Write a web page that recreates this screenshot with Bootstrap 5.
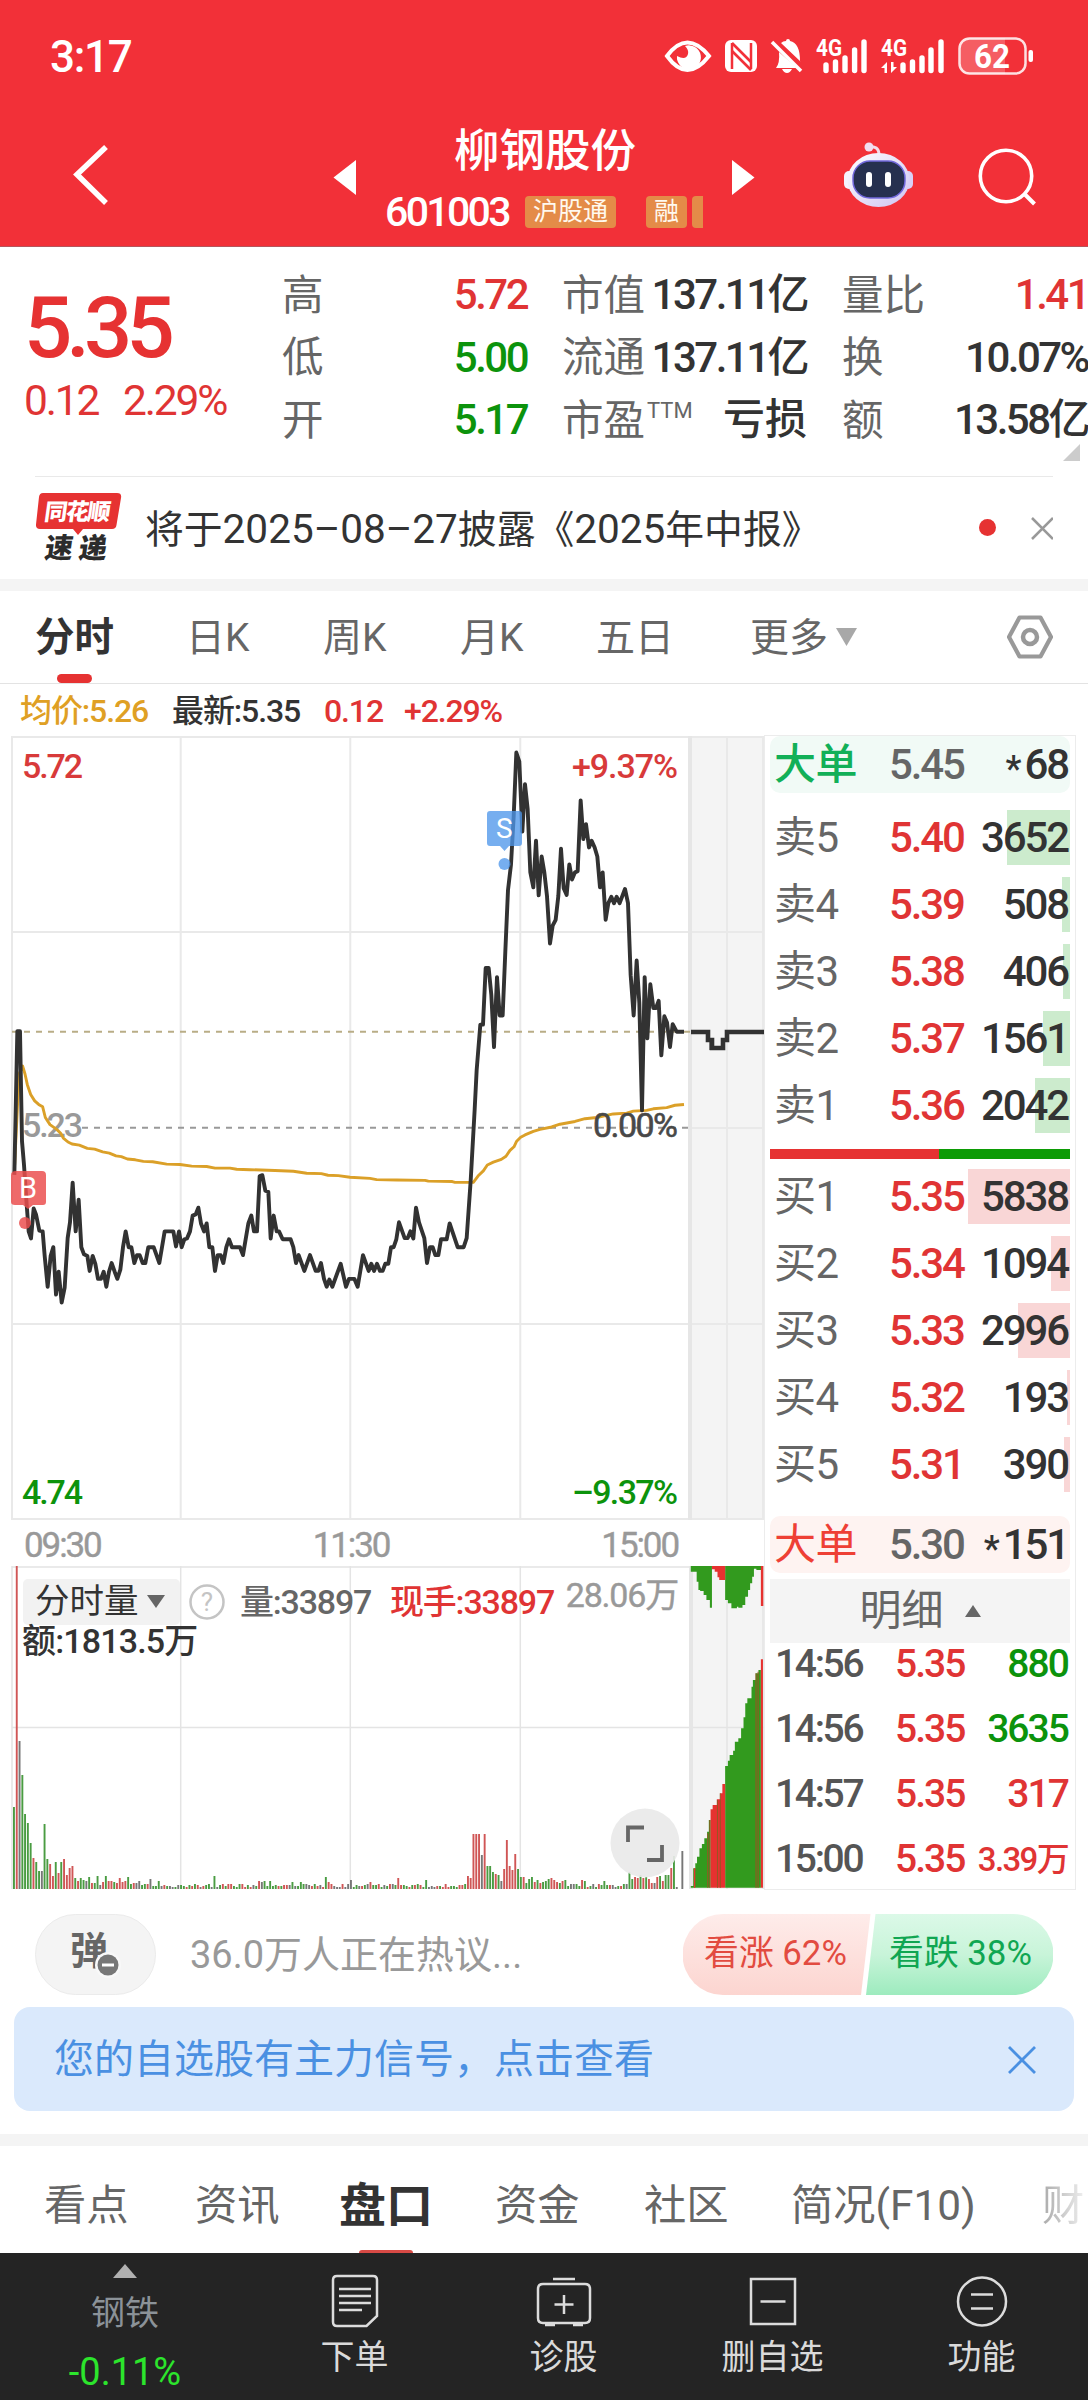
<!DOCTYPE html>
<html lang="zh-CN">
<head>
<meta charset="utf-8">
<meta name="viewport" content="width=device-width, initial-scale=1">
<title>柳钢股份 601003</title>
<link href="https://cdn.jsdelivr.net/npm/bootstrap@5.3.0/dist/css/bootstrap.min.css" rel="stylesheet">
<script src="https://cdn.jsdelivr.net/npm/bootstrap@5.3.0/dist/js/bootstrap.bundle.min.js"></script>
<style>
  body{width:1088px;height:2400px;overflow:hidden;background:#fff;color:#333;font-family:Roboto,"Noto Sans CJK SC",sans-serif;font-size:40px;line-height:1;white-space:nowrap}
  svg{display:block;flex:none}
  .num{font-weight:500;letter-spacing:-.05em}
  .up{color:#e03434}.down{color:#0c930c}.muted{color:#666}.soft{color:#999}
  .top{height:247px;background:#f23038;border-bottom:1px solid #b5555c;color:#fff}
  .statusbar{height:114px;padding:0 54px 0 50px}
  .clock{font-size:44px;font-weight:500;letter-spacing:-.03em}
  .titlebar{height:132px}
  .stock-name{font-size:45.5px;line-height:58px;font-weight:500;margin-top:5px}
  .code{font-size:41px;line-height:34px;letter-spacing:-.065em;width:139px;font-weight:500}
  .tag{background:#e48b48;border-radius:4px;height:32px;font-size:25px;line-height:31px;color:#fff9ef;text-align:center}
  .quote{height:229px;padding-top:17px}
  .price{font-size:85px;line-height:74px;font-weight:500;letter-spacing:-.07em;margin-top:27px;color:#e63232}
  .chg{font-size:42.5px;line-height:42px;margin-top:15px;font-weight:400}
  .qcol{width:245px}
  .qcol>div{height:62.6px;font-size:42px}
  .qcol .num{letter-spacing:-.06em}
  .qcol span:first-child{font-size:41.5px;color:#666}
  .qcol sup{font-size:22px;top:-.75em;letter-spacing:0;margin-left:2px}
  .notice{height:103px;margin:0 35px;border-top:1px solid #e9e9e9}
  .logo{width:86px;height:74px;overflow:visible}
  .band{height:12px;background:#f4f4f4}
  .ktabs{height:93px;border-bottom:1px solid #e3e3e3;color:#666;font-size:39px}
  .ktabs>div{height:92px;line-height:94px}
  .infoline{height:52px;padding-left:20px;font-size:32px;line-height:55px}
  .infoline .num{letter-spacing:-.035em}
  .axis{height:46px;font-size:35px;line-height:51px;color:#999;padding:0 86px 0 24px}
  .axis span{letter-spacing:-.06em;-webkit-text-stroke:.4px}
  .chartbox{width:764px}
  .book{width:312px;height:1155px;border:1px solid #ececec;padding:0 5px;margin-top:-1px}
  .big{height:57px;border-radius:10px;padding:0 2px 0 4px}
  .lv{height:55px;padding:0 2px 0 4px;margin-bottom:12px;position:relative}
  .lv i{position:absolute;right:0;top:0;height:55px}
  .lv span,.big span{position:relative}
  .c1{width:115px;font-size:42px;letter-spacing:-.01em}.c2{width:80px;font-size:42px}.c3{flex:1;text-align:right;font-size:42px}
  .big .star{font-size:36px;top:2px;margin-right:5px}
  .ask i{background:#ccebcd}.bid i{background:#f9d6d6}
  .lv .c1{color:#666}
  .detail{height:64px;background:#f4f4f4;font-size:42px;color:#666}
  .tk{height:42px;margin-bottom:23px;padding:0 2px 0 5px;font-size:39px}
  .tk>.num:nth-child(1){width:120px;color:#555;letter-spacing:-.06em}.tk>:nth-child(2){width:80px}.tk>:nth-child(3){flex:1;text-align:right}
  .vol{position:relative;height:323px}
  .volhead{position:absolute;left:23px;top:12px;width:655px;height:47px}
  .volhead .num{font-size:34px;letter-spacing:-.035em}
  .volsel{width:157px;height:46px;background:#f2f2f2;border-radius:5px;padding-left:12px;font-size:34.500px}
  .maxvol{font-size:34px;letter-spacing:-.035em;-webkit-text-stroke:.4px}
  .expand{position:absolute;left:610px;top:242px}
  .talk{height:117px;padding:12px 35px 0}
  .dm{width:121px;height:81px;border-radius:41px;background:#f4f4f4;border:1px solid #ebebeb;position:relative;font-size:38px;font-weight:700;color:#666;padding-left:34px}
  .dm svg{position:absolute;left:58px;top:36px}
  .poll{width:370px;height:81px;position:relative}
  .poll svg{position:absolute;left:0;top:0}
  .poll span{position:relative;width:185px;text-align:center;font-size:34.800px;line-height:79px}
  .tipbar{height:104px;margin:0 14px;border-radius:16px;background:#dae9fc;color:#4a90e2;padding:2px 38px 0 40px;font-size:40px}
  .ptabs{height:107px;font-size:42.300px;color:#666}
  .ptabs>div{height:107px;line-height:119px}
  .ptabs .on{font-size:47px;font-weight:700;color:#333;position:relative}
  .ptabs .on:after{content:"";position:absolute;left:20px;bottom:0;width:54px;height:3px;background:#d84a45;border-radius:3px 3px 0 0}
  .fade-tab{background:linear-gradient(90deg,#aaa,#eee);-webkit-background-clip:text;color:transparent}
  .dock{height:147px;background:#242424;color:#dadada;font-size:34px}
  .dock>div{width:209px}
  .dock>.dock-first{width:250px}
  .dock .cap{margin-top:12px}
</style>
</head>
<body>
<header class="top">
  <div class="statusbar d-flex align-items-center justify-content-between">
    <span class="clock">3:17</span>
    <svg width="370" height="60" viewBox="665 27 370 60" fill="#fff">
      <path d="M668 56Q688 29 710 56Q688 84 668 56Z" fill="none" stroke="#fff" stroke-width="4"/><path d="M686 46a12 12 0 1 1-8 10q9 5 11-2 1-4-3-8z"/>
      <rect x="726" y="40" width="32" height="32" rx="6"/><path d="M733 43V69M752 69V43" stroke="#f23038" stroke-width="2.5"/><path d="M733 43L752 62M733 51L752 70" stroke="#f23038" stroke-width="2.6"/>
      <path d="M777 68q4-5 3-16l18 16zM782 43q2-2 5-2 0-2 2-2t2 2q10 2 10 20l1 1z"/><path d="M773 42L802 71" stroke="#fff" stroke-width="3.6"/><path d="M783 69h10q-2 4-5 4t-5-4z"/>
      <g font-family="Roboto" font-weight="700" font-size="23"><text x="817" y="56" textLength="26" lengthAdjust="spacingAndGlyphs">4G</text><text x="882" y="56" textLength="26" lengthAdjust="spacingAndGlyphs">4G</text></g>
      <path d="M827 65V70.5M836.5 62V70.5M846 58V70.5M855.6 50V70.5M865 42V70.5M904 65V70.5M913.5 62V70.5M923 58V70.5M932 50V70.5M942 42V70.5" stroke="#fff" stroke-width="5.4" stroke-linecap="round"/>
      <path d="M882 68l6-6v11h-2.500v-5zM898 67l-6 6V62h2.500v5z"/>
      <path d="M971 38h35v36h-35q-10 0-10-10V48q0-10 10-10z" opacity=".22"/><rect x="960.500" y="38.500" width="66" height="35" rx="10" fill="none" stroke="#fff" stroke-width="2.500" opacity=".85"/><rect x="1029.500" y="50" width="4.500" height="12" rx="2"/>
      <text x="975" y="68" font-family="Roboto" font-weight="700" font-size="33" textLength="36" lengthAdjust="spacingAndGlyphs">62</text>
    </svg>
  </div>
  <div class="titlebar d-flex">
    <svg width="380" height="132" viewBox="0 114 380 132"><path d="M106 147L77 174.500L106 203" fill="none" stroke="#fff" stroke-width="5.500"/><path d="M333.500 177.500L356 160V195Z" fill="#fff"/></svg>
    <div class="flex-shrink-0 pt-1" style="width:330px">
      <div class="stock-name text-center">柳钢股份</div>
      <div class="d-flex align-items-center" style="margin-top:14px;padding-left:5px">
        <span class="code">601003</span><span class="tag" style="width:91px;margin-left:1px">沪股通</span><span class="tag" style="width:41px;margin-left:30px">融</span><span class="tag" style="width:11px;margin-left:5px;border-radius:4px 0 0 4px">&nbsp;</span>
      </div>
    </div>
    <svg width="378" height="132" viewBox="710 114 378 132">
      <defs><linearGradient id="rb" x1="0" y1="0" x2="1" y2="1"><stop offset="0" stop-color="#fff"/><stop offset="1" stop-color="#cfc4f2"/></linearGradient></defs>
      <path d="M732 160L754.500 177.500L732 195Z" fill="#fff"/>
      <path d="M868 147q11-2 11 8" fill="none" stroke="#f4dcea" stroke-width="3"/><circle cx="869" cy="147" r="4.500" fill="#f1dcf0"/>
      <rect x="844" y="171" width="11" height="18" rx="5" fill="#f5f2fd"/><rect x="902" y="171" width="11" height="18" rx="5" fill="#d9d0f7"/>
      <ellipse cx="878.500" cy="180" rx="31" ry="27" fill="url(#rb)"/><rect x="853" y="161" width="52" height="37" rx="17" fill="#26304f" stroke="#7168dc" stroke-width="1.500"/>
      <rect x="866" y="172" width="6" height="15" rx="3" fill="#fff"/><rect x="885" y="172" width="6" height="15" rx="3" fill="#fff"/>
      <circle cx="1006" cy="176" r="25.700" fill="none" stroke="#fff" stroke-width="3.600"/><path d="M1024.500 194L1034.500 204" stroke="#fff" stroke-width="4"/>
    </svg>
  </div>
</header>

<section class="quote d-flex position-relative">
  <div style="width:282px;padding-left:24px">
    <div class="price">5.35</div>
    <div class="chg num up d-flex"><span style="width:99px">0.12</span><span>2.29%</span></div>
  </div>
  <div class="qcol">
    <div class="d-flex justify-content-between align-items-center"><span>高</span><span class="num up">5.72</span></div>
    <div class="d-flex justify-content-between align-items-center"><span>低</span><span class="num down">5.00</span></div>
    <div class="d-flex justify-content-between align-items-center"><span>开</span><span class="num down">5.17</span></div>
  </div>
  <div class="qcol" style="margin-left:35px">
    <div class="d-flex justify-content-between align-items-center"><span>市值</span><span class="num">137.11亿</span></div>
    <div class="d-flex justify-content-between align-items-center"><span>流通</span><span class="num">137.11亿</span></div>
    <div class="d-flex justify-content-between align-items-center"><span>市盈<sup>TTM</sup></span><span class="num" style="letter-spacing:0">亏损</span></div>
  </div>
  <div class="qcol" style="margin-left:35px;width:246px">
    <div class="d-flex justify-content-between align-items-center"><span>量比</span><span class="num up">1.41</span></div>
    <div class="d-flex justify-content-between align-items-center"><span>换</span><span class="num">10.07%</span></div>
    <div class="d-flex justify-content-between align-items-center"><span>额</span><span class="num">13.58亿</span></div>
  </div>
  <svg class="position-absolute" style="right:8px;bottom:15px" width="17" height="17"><path d="M17 0V17H0Z" fill="#ccc"/></svg>
</section>

<section class="notice d-flex align-items-center">
  <svg class="logo" viewBox="35 490 86 74">
    <path d="M43 492H117Q122 492 121 497L116.500 524Q116 528 112 528H83L78 534L73 528H40Q35.500 528 36 523.500L39 496Q39.500 492 43 492Z" fill="#e63232"/>
    <g font-family="Noto Sans CJK SC" font-weight="900" transform="skewX(-8)"><text x="116.500" y="519" font-size="23" fill="#fff" textLength="66">同花顺</text><text x="122" y="557" font-size="28" fill="#2c2c2c" textLength="62">速递</text></g>
  </svg>
  <div style="margin-left:24px;font-size:38.800px;width:812px;padding-top:2px">将于<span style="font-size:40.500px">2025–08–27</span>披露《<span style="font-size:40.500px">2025</span>年中报》</div>
  <svg class="ms-auto" width="76" height="40" viewBox="977 507 76 40"><circle cx="987.500" cy="526.500" r="8.500" fill="#e63232"/><path d="M1032 517L1053 538M1053 517L1032 538" stroke="#999" stroke-width="2.500"/></svg>
</section>
<div class="band"></div>

<nav class="ktabs d-flex">
  <div class="fw-bold position-relative" style="color:#333;font-size:39.500px;width:154px;padding-left:35px">分时<svg class="position-absolute" style="left:57px;top:83px" width="35" height="9"><rect width="35" height="9" rx="4.500" fill="#e63232"/></svg></div>
  <div style="width:135px;padding-left:32px">日K</div>
  <div style="width:137px;padding-left:34px">周K</div>
  <div style="width:137px;padding-left:34px">月K</div>
  <div style="width:151px;padding-left:33px">五日</div>
  <div class="d-flex align-items-center flex-grow-1" style="padding-left:36px"><span style="padding-top:2px">更多</span><svg style="margin-left:8px" width="21" height="18"><path d="M0 0H21L10.500 18Z" fill="#a8a8a8"/></svg>
    <svg class="ms-auto" style="margin-right:35px" width="46" height="44" viewBox="0 0 46 44" fill="none" stroke="#999" stroke-width="4.200" stroke-linejoin="round"><path d="M12.500 2.500H33.500L44 22L33.500 41.500H12.500L2 22Z"/><circle cx="23" cy="22" r="7" stroke-width="4.500"/></svg></div>
</nav>
<div class="infoline d-flex"><span class="num" style="width:152px;color:#dfa024">均价:5.26</span><span class="num" style="width:152px">最新:5.35</span><span class="num up" style="width:80px">0.12</span><span class="num up">+2.29%</span></div>

<main class="d-flex">
  <div class="chartbox">
    <svg width="764" height="784" viewBox="0 736 764 784" font-family="Roboto" font-weight="500" font-size="34">
      <rect x="690" y="736" width="74" height="784" fill="#f4f4f4"/>
      <g stroke="#e9e9e9" stroke-width="2" fill="none"><path d="M12 737H764M12 932H764M12 1324H764M12 1519H764M690 1128H764M12 736V1520M180.700 736V1520M350.300 736V1520M520.300 736V1520M727 736V1520M763 736V1520"/><path d="M690 736V1520" stroke="#e6e6e6" stroke-width="4"/></g>
      <path d="M12 1031.700H690" stroke="#b9ad86" stroke-width="2" stroke-dasharray="6 6"/><path d="M82 1127.800H690" stroke="#999" stroke-width="2" stroke-dasharray="6 6"/>
      <text x="22" y="1137" fill="#999" textLength="61">5.23</text>
      <g fill="none" stroke="#dba028" stroke-width="2.900" stroke-linejoin="round">
        <path transform="translate(0 730) scale(.33333 .39541)" vector-effect="non-scaling-stroke" d="M44 1100L57 870L68 850L75 870L82 897L92 922L104 938L116 947L128 953L136 980L150 998L170 1010L182 1020L190 1032L204 1042L216 1047L238 1050L262 1058L284 1060L308 1067L328 1070L348 1077L364 1079L382 1085L406 1087L430 1091L458 1092L500 1098L540 1099L575 1103L620 1104L645 1108L690 1108L710 1111L750 1112L825 1114L880 1116L920 1121L964 1122L984 1126L1015 1127L1050 1131L1110 1134L1130 1137L1190 1138L1275 1139L1285 1141L1357 1142L1365 1144L1420 1144L1434 1128L1450 1115L1462 1100L1480 1093L1504 1086L1518 1078L1530 1063L1542 1054L1550 1040L1562 1030L1575 1024L1600 1015L1620 1010L1655 1004L1680 997L1725 990L1755 983L1790 980L1840 971L1880 969L1900 964L1940 962L1960 958L2000 955L2025 949L2052 947"/>
      </g>
      <path transform="translate(0 730) scale(.33333 .39541)" vector-effect="non-scaling-stroke" fill="none" stroke="#323232" stroke-width="3.900" stroke-linejoin="round" d="M43 1125L52 762H60L66 1040L72 1100L80 1200L86 1268L93 1286L101 1210L108 1225L118 1266L128 1268L134 1330L143 1408L152 1330L160 1308L168 1428L176 1370L185 1448L194 1410L203 1285L210 1245L218 1145L227 1268L236 1188L244 1308L252 1326L262 1330L269 1368L278 1330L286 1350L294 1388H303L311 1370L319 1408L327 1370L335 1348L344 1370L352 1388L361 1365L369 1308L377 1268L386 1308H394L403 1348L411 1328H419L428 1348H436L445 1308H461L478 1348L494 1268H520L528 1306L537 1268L545 1308L553 1288L561 1286L570 1268L578 1228L587 1225L595 1208L603 1248L612 1268L620 1248L628 1308H637L645 1368L653 1328H662L670 1348L679 1308L687 1288L696 1308H720L729 1328L745 1248L754 1228L762 1268H771L779 1128L787 1126L796 1165L805 1168L812 1286L821 1228L830 1268H837L848 1288H872L880 1308L888 1348L896 1328L913 1368L930 1328L947 1368H955L963 1348L972 1388L980 1408L988 1390L997 1408L1022 1350L1038 1408L1047 1388H1063L1073 1408L1089 1328L1106 1368L1114 1350L1122 1368L1131 1350L1140 1368H1148L1156 1350H1165L1173 1308H1181L1189 1288L1197 1245L1214 1285H1223L1231 1268L1240 1286L1248 1208L1257 1245L1273 1285L1281 1348L1290 1308H1298L1306 1328H1315L1323 1288H1340L1349 1248L1357 1268L1373 1308H1391L1400 1285L1412 1140L1424 960L1430 860L1441 745H1449L1457 602H1466L1474 670L1482 802L1491 625L1499 722H1508L1516 560L1524 405L1533 340L1541 220L1549 57L1558 80L1567 257L1575 137L1583 200L1591 360L1600 398L1608 280L1616 418L1625 320L1633 360L1641 420L1650 540L1658 495L1667 480L1675 420L1683 300L1691 400L1700 417L1708 340L1716 378L1725 360L1733 357L1742 178L1750 276L1758 238L1767 297L1775 280L1784 297L1792 320L1800 398L1808 360L1817 480L1825 438L1834 422L1842 438L1850 422L1859 438L1875 402L1884 438L1892 620L1901 722L1910 583L1918 690L1926 962L1934 625L1942 780L1951 643L1960 703H1968L1976 685L1984 823L1993 724L2001 740L2010 802L2018 744L2030 763H2052"/>
      <path d="M691 1032H708V1040H712V1048H723V1040H727V1032H764" fill="none" stroke="#323232" stroke-width="4.600"/>
      <path d="M711 1038V1050M721 1040H727" stroke="#323232" stroke-width="3"/>
      <g fill="#eb4e4e" opacity=".84"><path d="M16 1171H42Q46 1171 46 1175V1202Q46 1205 43 1205H33L28 1209L23 1205H15Q11 1205 11 1202V1175Q11 1171 16 1171Z"/><ellipse cx="25" cy="1223" rx="6" ry="6"/></g><text x="19" y="1198" font-weight="400" fill="#fff" font-size="29">B</text>
      <g fill="#4e97eb" opacity=".77"><path d="M490 811H519Q522 811 522 814V843Q522 846 519 846H509L504.500 851L500 846H490Q487 846 487 843V814Q487 811 490 811Z"/><circle cx="504.500" cy="864" r="6"/></g><text x="496" y="838" font-weight="400" fill="#fff" font-size="28">S</text>
      <text x="22" y="778" fill="#d83a3a" textLength="61">5.72</text><text x="572" y="778" fill="#d83a3a" textLength="106">+9.37%</text>
      <text x="593" y="1137" fill="#484848" textLength="85" font-weight="400" stroke="#484848" stroke-width=".6">0.00%</text>
      <text x="22" y="1504" fill="#0c930c" textLength="61">4.74</text><text x="572" y="1504" fill="#0c930c" textLength="106">–9.37%</text>
    </svg>
    <div class="axis d-flex justify-content-between"><span>09:30</span><span>11:30</span><span>15:00</span></div>
    <div class="vol">
      <svg id="volume" width="764" height="323" viewBox="0 1566 764 323">
        <rect x="690" y="1566" width="74" height="323" fill="#f4f4f4"/>
        <path d="M12 1567H764M12 1727.500H764M12 1566V1889M180.700 1566V1889M350.300 1566V1889M520.300 1566V1889M727 1566V1889M763 1566V1889" stroke="#e4e4e4" stroke-width="1.500" fill="none"/><path d="M691 1566V1889" stroke="#e6e6e6" stroke-width="4"/>
        <g id="bars"></g>
        <g transform="translate(544 1480) scale(.347 .33333)">
          <path fill="#329a1e" d="M423 258H484V383H478V360H468V345H460V333H450V330H445V305H440V275H423ZM522 258H627V270H612V266H605V290H600V310H594V330H588V350H580V375H572V383H560V380H556V385H540V370H530V360H522ZM423 1223V1218H430V1165H436V1150H441V1130H448V1105H455V1092H462V1075H470V1055H475V1020H480V1223ZM522 1223V858H530V842H535V825H545V812H550V785H560V775H568V745H575V712H580V670H586V655H598V620H602V600H610V580H618V570H625V1223Z"/>
          <path fill="#e63230" d="M484 258H522V300H505V292H500V275H492V268H484ZM480 1223V988H486V975H498V958H508V940H514V912H522V1223ZM625 258H632V378H625ZM625 538H631V1223H625ZM432 1165H436V1223H432Z"/>
          <path stroke="#9a5423" stroke-width="3" d="M472 1060V1223M478 1020V1223M500 960V1223M508 940V1223M611 580V1223M617 575V1223"/>
        </g>
      </svg>
      <div class="volhead d-flex align-items-center">
        <div class="volsel d-flex align-items-center">分时量<svg style="margin-left:8px" width="18" height="13"><path d="M0 0H18L9 13Z" fill="#666"/></svg></div>
        <svg style="margin-left:9px" width="36" height="36"><circle cx="18" cy="18" r="16.500" fill="none" stroke="#c4c4c4" stroke-width="2.500"/><text x="18" y="27" text-anchor="middle" fill="#c4c4c4" font-size="26">?</text></svg>
        <span class="num muted" style="margin-left:15px;width:150px">量:33897</span><span class="num up">现手:33897</span><span class="maxvol soft align-self-start ms-auto">28.06万</span>
      </div>
      <div class="position-absolute" style="left:22px;top:58px;font-size:34px"><span class="num" style="letter-spacing:-.025em">额:1813.5万</span></div>
      <svg class="expand" width="70" height="70"><circle cx="35" cy="35" r="34.500" fill="#e9e9e9" opacity=".92"/><path d="M18 34V19.500H34M37 52H52V37" fill="none" stroke="#666" stroke-width="3.800"/></svg>
    </div>
  </div>

  <aside class="book">
    <div class="big d-flex align-items-center" style="background:#f1faf6"><span class="c1" style="color:#12b058;font-weight:500">大单</span><span class="c2 num muted">5.45</span><span class="c3 num"><span class="star">*</span>68</span></div>
    <div id="asks" style="margin-top:17px"></div>
    <div class="d-flex" style="height:10px;margin:16px 0 10px"><div style="width:169px;background:#e63232"></div><div class="flex-grow-1" style="background:#0c9b05"></div></div>
    <div id="bids"></div>
    <div class="big d-flex align-items-center" style="background:#fef3f1;margin-top:24px"><span class="c1" style="color:#ee4035">大单</span><span class="c2 num muted">5.30</span><span class="c3 num"><span class="star">*</span>151</span></div>
    <div class="detail d-flex align-items-center justify-content-center" style="margin-top:6px">明细<svg style="margin-left:21px" width="16" height="12"><path d="M0 12L8 0L16 12Z" fill="#666"/></svg></div>
    <div class="tk d-flex align-items-center"><span class="num">14:56</span><span class="num up">5.35</span><span class="num down">880</span></div>
    <div class="tk d-flex align-items-center"><span class="num">14:56</span><span class="num up">5.35</span><span class="num down">3635</span></div>
    <div class="tk d-flex align-items-center"><span class="num">14:57</span><span class="num up">5.35</span><span class="num up">317</span></div>
    <div class="tk d-flex align-items-center mb-0"><span class="num">15:00</span><span class="num up">5.35</span><span class="num up" style="font-size:33px">3.39万</span></div>
  </aside>
</main>

<section class="talk d-flex align-items-center">
  <div class="dm d-flex align-items-center"><span style="margin-top:-8px">弹</span><svg width="28" height="28"><circle cx="14" cy="14" r="13" fill="#f8f8f8"/><circle cx="14" cy="14" r="10.500" fill="#777"/><path d="M8 14H20" stroke="#fff" stroke-width="3"/></svg></div>
  <span class="soft" style="margin-left:34px;font-size:38px">36.0万人正在热议...</span>
  <div class="poll d-flex ms-auto">
    <svg width="370" height="81"><defs><linearGradient id="pr" x2="0" y2="1"><stop stop-color="#feecea"/><stop offset="1" stop-color="#fcd5d0"/></linearGradient><linearGradient id="pg" x2="0" y2="1"><stop stop-color="#dcf9e8"/><stop offset=".5" stop-color="#c8f4d9"/><stop offset="1" stop-color="#9debbe"/></linearGradient></defs>
      <path d="M40 0H187.500L178 81H40A40.500 40.500 0 0 1 40 0Z" fill="url(#pr)"/><path d="M192.500 0H330A40.500 40.500 0 0 1 330 81H183Z" fill="url(#pg)"/></svg>
    <span style="color:#e24b40">看涨 62%</span><span style="color:#10a652">看跌 38%</span>
  </div>
</section>
<section class="tipbar d-flex align-items-center justify-content-between"><span>您的自选股有主力信号，点击查看</span><svg width="28" height="28"><path d="M1 1L27 27M27 1L1 27" stroke="#4a90e2" stroke-width="2.800"/></svg></section>
<div class="band" style="margin-top:23px"></div>

<nav class="ptabs d-flex">
  <div style="width:151px;margin-left:44px">看点</div><div style="width:144px">资讯</div><div class="on" style="width:156px">盘口</div><div style="width:149px">资金</div><div style="width:147px">社区</div><div style="width:251px">简况(F10)</div><div class="fade-tab">财</div>
</nav>
<footer class="dock d-flex">
  <div class="dock-first d-flex flex-column align-items-center"><svg style="margin-top:11px" width="24" height="14"><path d="M0 14L12 0L24 14Z" fill="#b0b0b0"/></svg><span style="color:#8b9298;margin-top:18px">钢铁</span><span style="color:#2ce52c;font-size:38px;margin-top:23px">-0.11%</span></div>
  <div class="d-flex flex-column align-items-center"><svg style="margin-top:21px" width="48" height="54" fill="none" stroke="#dcdcdc" stroke-width="2.500"><path d="M6 2H42Q46 2 46 6V42L35.500 52H6Q2 52 2 48V6Q2 2 6 2ZM8 15H40M8 22H40M8 29H40M8 36H31"/></svg><span class="cap">下单</span></div>
  <div class="d-flex flex-column align-items-center"><svg style="margin-top:21px" width="56" height="54" fill="none" stroke="#dcdcdc" stroke-width="2.500"><path d="M17 5H39M7 10H49Q54 10 54 15V44Q54 49 49 49H7Q2 49 2 44V15Q2 10 7 10ZM28 21V40M18.500 30.500H37.500M9 51H19M37 51H47"/></svg><span class="cap">诊股</span></div>
  <div class="d-flex flex-column align-items-center"><svg style="margin-top:21px" width="48" height="54" fill="none" stroke="#dcdcdc" stroke-width="2.500"><path d="M2 5H46V50H2ZM11.500 27.500H36.500"/></svg><span class="cap">删自选</span></div>
  <div class="d-flex flex-column align-items-center"><svg style="margin-top:21px" width="52" height="54" fill="none" stroke="#dcdcdc" stroke-width="2.500"><circle cx="26" cy="27.500" r="24"/><path d="M15 20.500H37M15 34.500H37"/></svg><span class="cap">功能</span></div>
</footer>

<script>
  // order book levels: label, price, lots, depth bar width
  const asks=[['卖5','5.40','3652',63],['卖4','5.39','508',8],['卖3','5.38','406',7],['卖2','5.37','1561',27],['卖1','5.36','2042',35]];
  const bids=[['买1','5.35','5838',102],['买2','5.34','1094',19],['买3','5.33','2996',52],['买4','5.32','193',3],['买5','5.31','390',6]];
  const level=(r,c)=>`<div class="lv ${c} d-flex align-items-center"><i style="width:${r[3]}px"></i><span class="c1">${r[0]}</span><span class="c2 num up">${r[1]}</span><span class="c3 num">${r[2]}</span></div>`;
  document.getElementById('asks').innerHTML=asks.map(r=>level(r,'ask')).join('');
  document.getElementById('bids').innerHTML=bids.map(r=>level(r,'bid')).join('');
  // minute volumes: colour letter + height
  const head='g82 r323 k148 g114 g75 g66 g46 r31 g27 g18 k18 g65 g30 r25 r13 g27 r16 g27 r30 r14 r21 r23 g11 r8 g11 g9 k8 g12 r6 g6 g13 k4 r7 g13 r8 r8 g7 r6 r11 r7 r8 g12 g5 r6 k6 k8'.split(' ');
  const peaks={49:'k10',52:'g8',72:'g13',88:'r8',89:'k7',90:'g8',92:'g8',100:'g7',103:'g7',112:'g12',113:'r7',121:'k9',128:'r7',138:'r11',148:'g9',163:'r13',164:'r11',165:'r55',166:'r55',167:'r55',168:'k34',169:'r55',170:'g23',171:'g23',172:'g17',173:'r15',174:'g14',175:'k8',176:'r20',177:'r49',178:'r23',179:'r19',180:'r35',181:'g20',182:'g12',183:'r12',184:'g6',185:'g10',186:'g12',187:'r7',188:'g9',189:'r6',190:'g7',191:'g8',192:'g10',193:'r11',194:'r9',195:'r7',196:'g6',197:'r8',198:'g9',204:'r9',205:'g8',212:'g8',221:'g17',222:'g10',223:'r12',224:'r11',225:'g14',226:'r11',227:'g12',228:'r10',229:'r6',230:'k6',231:'r12',232:'g13',233:'r8',234:'g14',235:'g14',236:'r21',237:'g33',238:'k2',239:'k0',240:'k38'};
  const col={g:'#4a9c42',r:'#d05656',k:'#777'};let out='',seed=7;
  for(let i=0;i<241;i++){seed=(seed*73+41)%997;const b=head[i]||peaks[i]||('grkrg'[seed%5]+(2+seed%4));const h=+b.slice(1);
    out+=`<rect x="${(13+i*2.785).toFixed(1)}" y="${1889-h}" width="1.900" height="${h}" fill="${col[b[0]]}"/>`}
  document.getElementById('bars').innerHTML=out;
</script>
</body>
</html>
